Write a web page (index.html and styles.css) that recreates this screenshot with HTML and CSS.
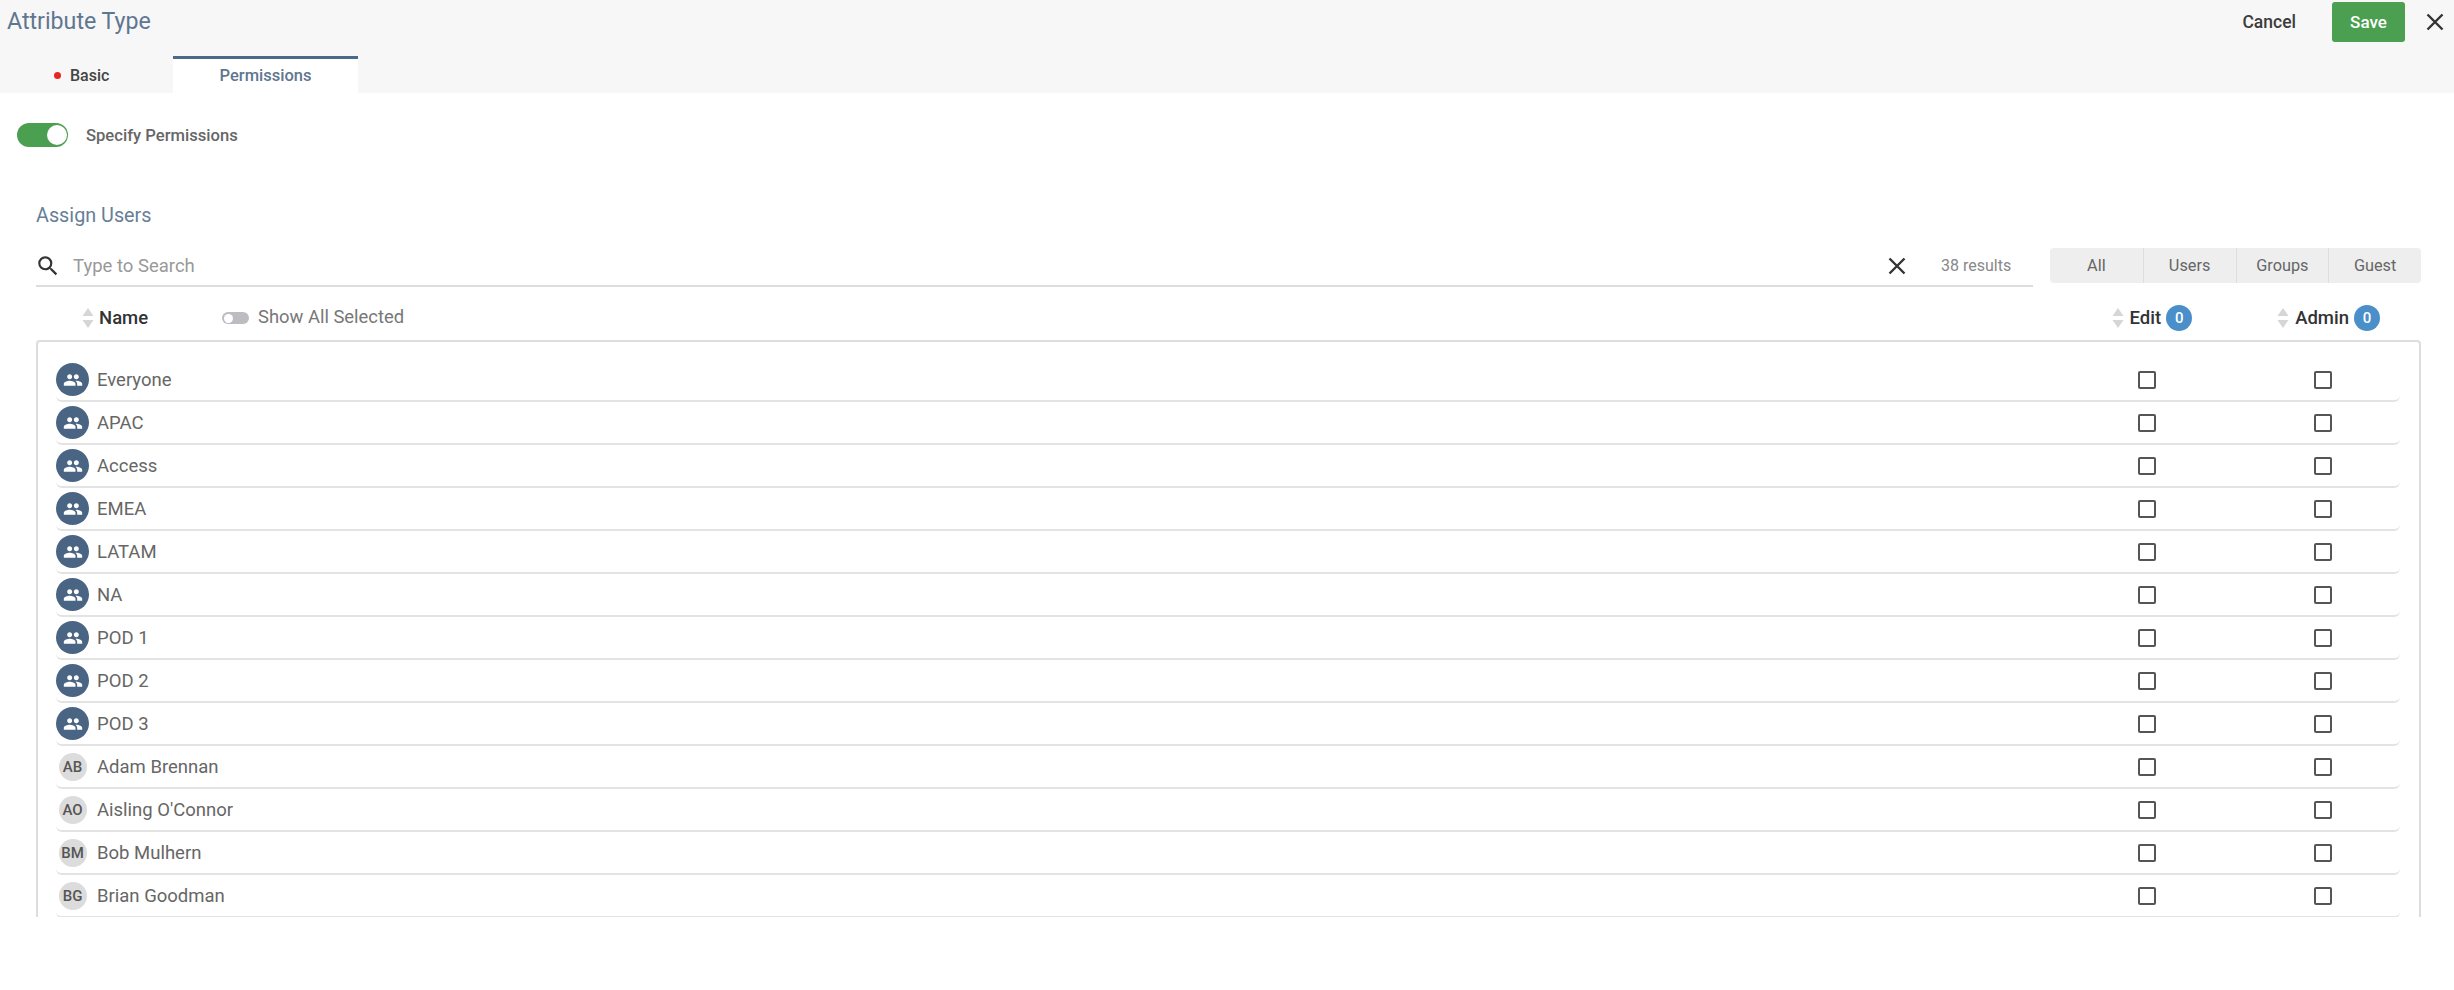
FILE: index.html
```html
<!DOCTYPE html>
<html lang="en">
<head>
<meta charset="utf-8">
<title>Attribute Type</title>
<link rel="stylesheet" href="styles.css">
</head>
<body>
<svg class="defs" width="0" height="0" aria-hidden="true">
  <symbol id="people" viewBox="0 0 24 24"><path d="M16 11c1.66 0 2.99-1.34 2.99-3S17.66 5 16 5c-1.66 0-3 1.34-3 3s1.34 3 3 3zm-8 0c1.66 0 2.99-1.34 2.99-3S9.66 5 8 5C6.34 5 5 6.34 5 8s1.34 3 3 3zm0 2c-2.33 0-7 1.17-7 3.5V19h14v-2.5c0-2.33-4.67-3.5-7-3.5zm8 0c-.29 0-.62.02-.97.05 1.16.84 1.97 1.97 1.97 3.45V19h6v-2.5c0-2.33-4.67-3.5-7-3.5z"/></symbol>
  <symbol id="sort" viewBox="0 0 12 20"><path d="M6 0l5.500 8H.5zM6 20L.5 12h11z"/></symbol>
  <symbol id="close" viewBox="0 0 20 20"><path d="M2.500 2.500l15 15M17.500 2.500l-15 15"/></symbol>
</svg>
<header class="header">
  <div class="header-top">
    <h1 class="title">Attribute Type</h1>
    <button class="cancel">Cancel</button>
    <button class="save">Save</button>
    <svg class="close-main"><use href="#close"/></svg>
  </div>
  <nav class="tabs">
    <div class="tab tab-basic"><span class="dot"></span>Basic</div>
    <div class="tab tab-active">Permissions</div>
  </nav>
</header>
<main class="main">
  <div class="specify">
    <span class="switch"><span class="knob"></span></span>
    <span class="specify-label">Specify Permissions</span>
  </div>
  <section class="assign">
    <h2 class="assign-title">Assign Users</h2>
    <div class="search-row">
      <div class="search">
        <svg class="search-icon" viewBox="0 0 24 24"><path d="M15.500 14h-.79l-.28-.27A6.470 6.470 0 0 0 16 9.500 6.500 6.500 0 1 0 9.500 16c1.610 0 3.090-.59 4.230-1.570l.27.28v.79l5 4.990L20.490 19l-4.990-5zm-6 0C7.010 14 5 11.990 5 9.500S7.010 5 9.500 5 14 7.010 14 9.500 11.990 14 9.500 14z"/></svg>
        <span class="search-text">Type to Search</span>
        <svg class="close-search"><use href="#close"/></svg>
        <span class="results">38 results</span>
      </div>
      <div class="segments">
        <span class="segment">All</span>
        <span class="segment">Users</span>
        <span class="segment">Groups</span>
        <span class="segment">Guest</span>
      </div>
    </div>
    <div class="columns">
      <svg class="sort sort-name"><use href="#sort"/></svg>
      <span class="col-name">Name</span>
      <span class="mini-switch"><span class="mini-knob"></span></span>
      <span class="show-all">Show All Selected</span>
      <span class="col-right col-edit"><svg class="sort"><use href="#sort"/></svg><b>Edit</b><i class="badge">0</i></span>
      <span class="col-right col-admin"><svg class="sort"><use href="#sort"/></svg><b>Admin</b><i class="badge">0</i></span>
    </div>
    <div class="list">
      <div class="row"><span class="avatar group"><svg><use href="#people"/></svg></span><span class="name">Everyone</span><span class="check"></span><span class="check"></span></div>
      <div class="row"><span class="avatar group"><svg><use href="#people"/></svg></span><span class="name">APAC</span><span class="check"></span><span class="check"></span></div>
      <div class="row"><span class="avatar group"><svg><use href="#people"/></svg></span><span class="name">Access</span><span class="check"></span><span class="check"></span></div>
      <div class="row"><span class="avatar group"><svg><use href="#people"/></svg></span><span class="name">EMEA</span><span class="check"></span><span class="check"></span></div>
      <div class="row"><span class="avatar group"><svg><use href="#people"/></svg></span><span class="name">LATAM</span><span class="check"></span><span class="check"></span></div>
      <div class="row"><span class="avatar group"><svg><use href="#people"/></svg></span><span class="name">NA</span><span class="check"></span><span class="check"></span></div>
      <div class="row"><span class="avatar group"><svg><use href="#people"/></svg></span><span class="name">POD 1</span><span class="check"></span><span class="check"></span></div>
      <div class="row"><span class="avatar group"><svg><use href="#people"/></svg></span><span class="name">POD 2</span><span class="check"></span><span class="check"></span></div>
      <div class="row"><span class="avatar group"><svg><use href="#people"/></svg></span><span class="name">POD 3</span><span class="check"></span><span class="check"></span></div>
      <div class="row"><span class="avatar user">AB</span><span class="name">Adam Brennan</span><span class="check"></span><span class="check"></span></div>
      <div class="row"><span class="avatar user">AO</span><span class="name">Aisling O'Connor</span><span class="check"></span><span class="check"></span></div>
      <div class="row"><span class="avatar user">BM</span><span class="name">Bob Mulhern</span><span class="check"></span><span class="check"></span></div>
      <div class="row"><span class="avatar user">BG</span><span class="name">Brian Goodman</span><span class="check"></span><span class="check"></span></div>
    </div>
  </section>
</main>
</body>
</html>
```

FILE: styles.css
```css
* { box-sizing: border-box; }
html, body { margin: 0; padding: 0; }
body {
  width: 2454px;
  height: 990px;
  overflow: hidden;
  background: #fff;
  font-family: Roboto, "Liberation Sans", sans-serif;
  color: #666;
}
.defs { display: block; height: 0; }

.header {
  height: 93px;
  background: #f7f7f7;
  display: flex;
  flex-direction: column;
  justify-content: space-between;
}
.header-top {
  display: flex;
  align-items: center;
  height: 42px;
  padding: 1px 0 0 7px;
}
.title {
  margin: 0 auto 2px 0;
  font-size: 23.200px;
  font-weight: 400;
  color: #5f7690;
}
.cancel, .save {
  border: 0;
  font-family: inherit;
  font-weight: 500;
  padding: 0;
}
.cancel { background: none; color: #3c3c3c; margin-right: 36px; font-size: 17.500px; }
.save {
  width: 73px;
  height: 40px;
  background: #4a9f50;
  color: #fff;
  border-radius: 3px;
  margin-right: 20px;
  font-size: 17px;
}
.close-main {
  width: 20px;
  height: 20px;
  margin-right: 9px;
  fill: none;
  stroke: #333;
  stroke-width: 2.400px;
}
.tabs { display: flex; height: 37px; }
.tab {
  display: flex;
  align-items: center;
  font-size: 16.500px;
  font-weight: 500;
  height: 37px;
}
.tab-basic { width: 173px; color: #444; padding: 1px 0 0 54px; gap: 9px; font-size: 16px; }
.tab-active {
  width: 185px;
  justify-content: center;
  background: #fff;
  border-top: 3px solid #4a6a8a;
  color: #5f7690;
  padding-bottom: 2px;
}
.dot { width: 7px; height: 7px; border-radius: 50%; background: #e8281e; }

.main { padding: 30px 33px 0 17px; }
.specify { display: flex; align-items: center; height: 24px; gap: 18px; }
.switch {
  width: 51px;
  height: 24px;
  border-radius: 12px;
  background: #4a9f50;
  display: flex;
  justify-content: flex-end;
  align-items: center;
  padding-right: 1.500px;
}
.knob { width: 20px; height: 20px; border-radius: 50%; background: #fff; }
.specify-label { font-size: 16.600px; font-weight: 500; color: #666; }

.assign { padding-left: 19px; }
.assign-title {
  margin: 57px 0 0;
  height: 24px;
  line-height: 24px;
  font-size: 19.800px;
  font-weight: 400;
  color: #677e97;
}
.search-row { display: flex; gap: 17px; margin-top: 20px; }
.search {
  width: 1997px;
  height: 39px;
  border-bottom: 2px solid #ddd;
  display: flex;
  align-items: center;
  padding-bottom: 2px;
}
.search-icon { width: 26px; height: 26px; margin-left: -1px; fill: #333; flex: none; }
.search-text { margin-left: 12px; font-size: 18.500px; color: #999; flex: 1; }
.close-search {
  width: 20px;
  height: 20px;
  fill: none;
  stroke: #333;
  stroke-width: 2.400px;
}
.results { width: 70px; margin-left: 34px; margin-right: 22px; font-size: 16px; color: #888; white-space: nowrap; }
.segments {
  width: 371px;
  height: 35px;
  display: grid;
  grid-template-columns: repeat(4, 1fr);
  background: #eee;
  border-radius: 4px;
}
.segment {
  display: flex;
  align-items: center;
  justify-content: center;
  font-size: 16.300px;
  color: #666;
  border-left: 1px solid #ddd;
}
.segment:first-child { border-left: 0; }

.columns { display: flex; align-items: center; height: 53px; padding-top: 9px; }
.sort { width: 12px; height: 20px; fill: #d6d6d6; flex: none; }
.sort-name { margin-left: 46px; }
.col-name { margin-left: 5px; font-size: 18.500px; font-weight: 500; color: #333; width: 123px; }
.mini-switch {
  width: 27px;
  height: 12px;
  border-radius: 6px;
  background: #bdbdc1;
  display: flex;
  align-items: center;
  padding-left: 2px;
}
.mini-knob { width: 9px; height: 9px; border-radius: 50%; background: #fff; }
.show-all { margin-left: 9px; font-size: 18.400px; color: #777; margin-right: auto; position: relative; top: -2px; }
.col-right { display: flex; align-items: center; }
.col-right b { font-size: 18.500px; font-weight: 500; color: #333; margin-left: 6px; }
.col-edit { margin-right: 85px; }
.col-admin { margin-right: 41px; }
.badge {
  width: 26px;
  height: 26px;
  margin-left: 5px;
  border-radius: 50%;
  background: #4a8fc9;
  color: #fff;
  font-style: normal;
  font-size: 15px;
  font-weight: 500;
  display: flex;
  align-items: center;
  justify-content: center;
}

.list {
  height: 577px;
  overflow: hidden;
  border: 2px solid #ddd;
  border-bottom: 0;
  border-radius: 4px 4px 0 0;
  padding: 17px 19px 0 18px;
}
.row {
  height: 43px;
  display: flex;
  align-items: center;
  gap: 158px;
  padding-right: 68px;
  border-bottom: 2px solid #e3e3e3;
  border-radius: 0 0 6px 6px;
}
.avatar {
  width: 33px;
  height: 33px;
  border-radius: 50%;
  display: flex;
  align-items: center;
  justify-content: center;
  flex: none;
}
.group { background: #4a6583; }
.group svg { width: 20px; height: 20px; fill: #fff; }
.user {
  width: 28px;
  height: 28px;
  margin: 0 2.500px;
  background: #dcdcdc;
  color: #555;
  font-size: 15px;
  font-weight: 500;
}
.name { flex: 1; margin-left: -150px; font-size: 18.500px; color: #666; }
.check {
  width: 18px;
  height: 18px;
  border: 2.500px solid #555;
  border-radius: 2px;
  flex: none;
}
```
